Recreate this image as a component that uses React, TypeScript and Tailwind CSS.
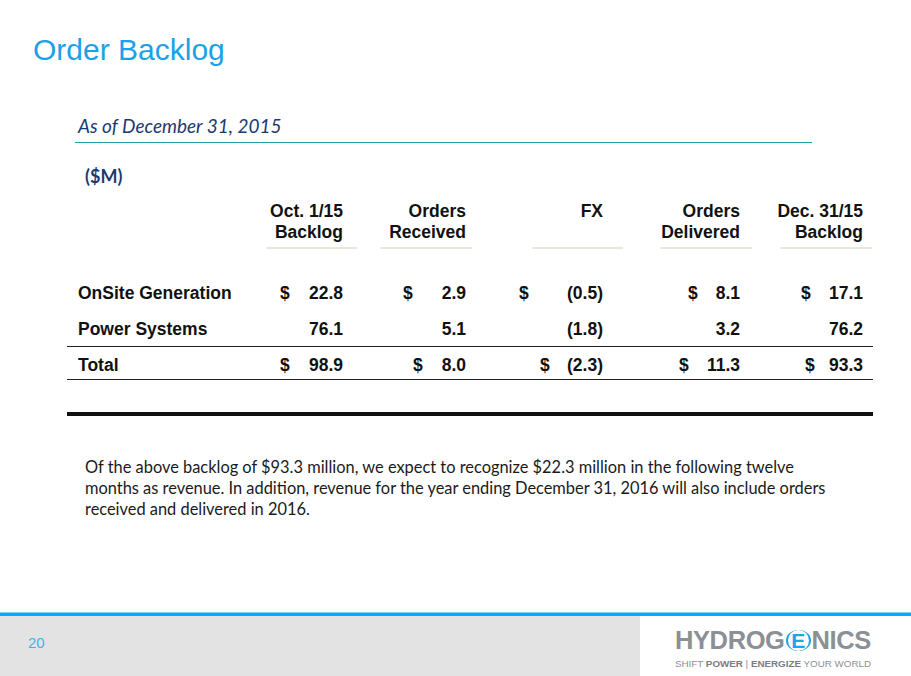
import React from "react";

const arial = { fontFamily: '"Liberation Sans", Arial, sans-serif' };
const lato = { fontFamily: "Lato, sans-serif" };

type Cell = { dollar?: boolean; value: string };

// column geometry: cell width, text padding, underline margins, $ offsets
const cols = [
  { w: "w-[95px]", pr: "pr-[7px]", line: "ml-[11px] -mr-[7px]", pad: ["pl-[25px]", "pl-[25px]"] },
  { w: "w-[125px]", pr: "pr-[9px]", line: "ml-[30px] mr-[3px]", pad: ["pl-[53px]", "pl-[63px]"] },
  { w: "w-[137px]", pr: "pr-[9px]", line: "ml-[57px] -mr-[11px]", pad: ["pl-[44px]", "pl-[65px]"] },
  { w: "w-[138px]", pr: "pr-[10px]", line: "ml-[48px] -mr-[2px]", pad: ["pl-[76px]", "pl-[67px]"] },
  { w: "w-[123px]", pr: "pr-[10px]", line: "ml-[30px] mr-[1px]", pad: ["pl-[51px]", "pl-[55px]"] },
];

const headers = [
  ["Oct. 1/15", "Backlog"],
  ["Orders", "Received"],
  ["FX", ""],
  ["Orders", "Delivered"],
  ["Dec. 31/15", "Backlog"],
];

const rows: { label: string; cells: Cell[] }[] = [
  {
    label: "OnSite Generation",
    cells: [
      { dollar: true, value: "22.8" },
      { dollar: true, value: "2.9" },
      { dollar: true, value: "(0.5)" },
      { dollar: true, value: "8.1" },
      { dollar: true, value: "17.1" },
    ],
  },
  {
    label: "Power Systems",
    cells: [{ value: "76.1" }, { value: "5.1" }, { value: "(1.8)" }, { value: "3.2" }, { value: "76.2" }],
  },
  {
    label: "Total",
    cells: [
      { dollar: true, value: "98.9" },
      { dollar: true, value: "8.0" },
      { dollar: true, value: "(2.3)" },
      { dollar: true, value: "11.3" },
      { dollar: true, value: "93.3" },
    ],
  },
];

function ValueCell({ cell, i, total }: { cell: Cell; i: number; total?: boolean }) {
  const c = cols[i];
  return (
    <div className={`${c.w} ${c.pr} ${total ? c.pad[1] : c.pad[0]} flex justify-between`}>
      <span>{cell.dollar ? "$" : ""}</span>
      <span>{cell.value}</span>
    </div>
  );
}

function Logo() {
  return (
    <div className="flex flex-col" style={arial}>
      <div className="flex items-center text-[25.5px] leading-none font-bold tracking-[-0.4px] text-[#8b9095]">
        <span>HYDROG</span>
        <span className="mx-[1px] inline-flex h-[21px] w-[25px] items-center justify-center rounded-[50%] border-x-[2.5px] border-y-0 border-[#1ea6e3] text-[21px] text-[#1ea6e3]">
          E
        </span>
        <span>NICS</span>
      </div>
      <div className="mt-[5px] text-[9.8px] leading-none whitespace-nowrap text-[#8b9095]">
        SHIFT <span className="font-bold text-[#787d83]">POWER</span> | <span className="font-bold text-[#787d83]">ENERGIZE</span> YOUR WORLD
      </div>
    </div>
  );
}

export default function App() {
  return (
    <div className="relative flex h-[676px] w-[911px] flex-col overflow-hidden bg-white">
      <div className="h-[72px] pt-[35px] pl-[33px] text-[30px] leading-none text-[#1ba2e6]" style={arial}>
        Order Backlog
      </div>

      <div className="ml-[75px] flex h-[71px] w-[737px] items-end border-b-[1.5px] border-[#22a0a6] pb-[7px] pl-[3px]">
        <span className="text-[19px] leading-none italic text-[#1c3a72]" style={lato}>
          As of December 31, 2015
        </span>
      </div>

      <div className="mt-[24px] pl-[85px] text-[18px] leading-none font-bold text-[#1c3a72]" style={lato}>
        ($M)
      </div>

      <div className="ml-[67px] w-[806px] text-[17.5px] font-bold text-[#111]" style={arial}>
        <div className="mt-[16px] flex">
          <div className="w-[188px]" />
          {headers.map((h, i) => (
            <div key={i} className={`${cols[i].w} flex flex-col`}>
              <div className={`${cols[i].pr} h-[42px] text-right leading-[21px]`}>
                <div>{h[0]}</div>
                <div>{h[1]}</div>
              </div>
              <div className={`${cols[i].line} mt-[4px] h-[2px] bg-[#e9e7de]`} />
            </div>
          ))}
        </div>

        <div className="mt-[26px] flex h-[37px] items-center">
          <div className="w-[188px] pl-[11px]">{rows[0].label}</div>
          {rows[0].cells.map((c, i) => (
            <ValueCell key={i} cell={c} i={i} />
          ))}
        </div>
        <div className="flex h-[35px] items-center border-b border-[#222]">
          <div className="w-[188px] pl-[11px]">{rows[1].label}</div>
          {rows[1].cells.map((c, i) => (
            <ValueCell key={i} cell={c} i={i} />
          ))}
        </div>
        <div className="flex h-[33px] items-center border-b border-[#222] pt-[4px]">
          <div className="w-[188px] pl-[11px]">{rows[2].label}</div>
          {rows[2].cells.map((c, i) => (
            <ValueCell key={i} cell={c} i={i} total />
          ))}
        </div>

        <div className="mt-[32px] h-[3.5px] bg-[#111]" />
      </div>

      <div className="mt-[40px] pl-[85px] text-[16.4px] leading-[21px] whitespace-nowrap text-[#1a1a1a]" style={lato}>
        <div>Of the above backlog of $93.3 million, we expect to recognize $22.3 million in the following twelve</div>
        <div>months as revenue. In addition, revenue for the year ending December 31, 2016 will also include orders</div>
        <div>received and delivered in 2016.</div>
      </div>

      <footer className="mt-auto flex h-[64px] flex-col">
        <div className="h-[4px] border-t border-[#7fd4f6] bg-[#03aeee]" />
        <div className="flex flex-1">
          <div className="w-[640px] bg-[#e3e3e3] pt-[19px] pl-[28px] text-[15px] leading-none text-[#3fb5e5]" style={arial}>
            20
          </div>
          <div className="flex-1 pt-[12px] pl-[35px]">
            <Logo />
          </div>
        </div>
      </footer>
    </div>
  );
}
